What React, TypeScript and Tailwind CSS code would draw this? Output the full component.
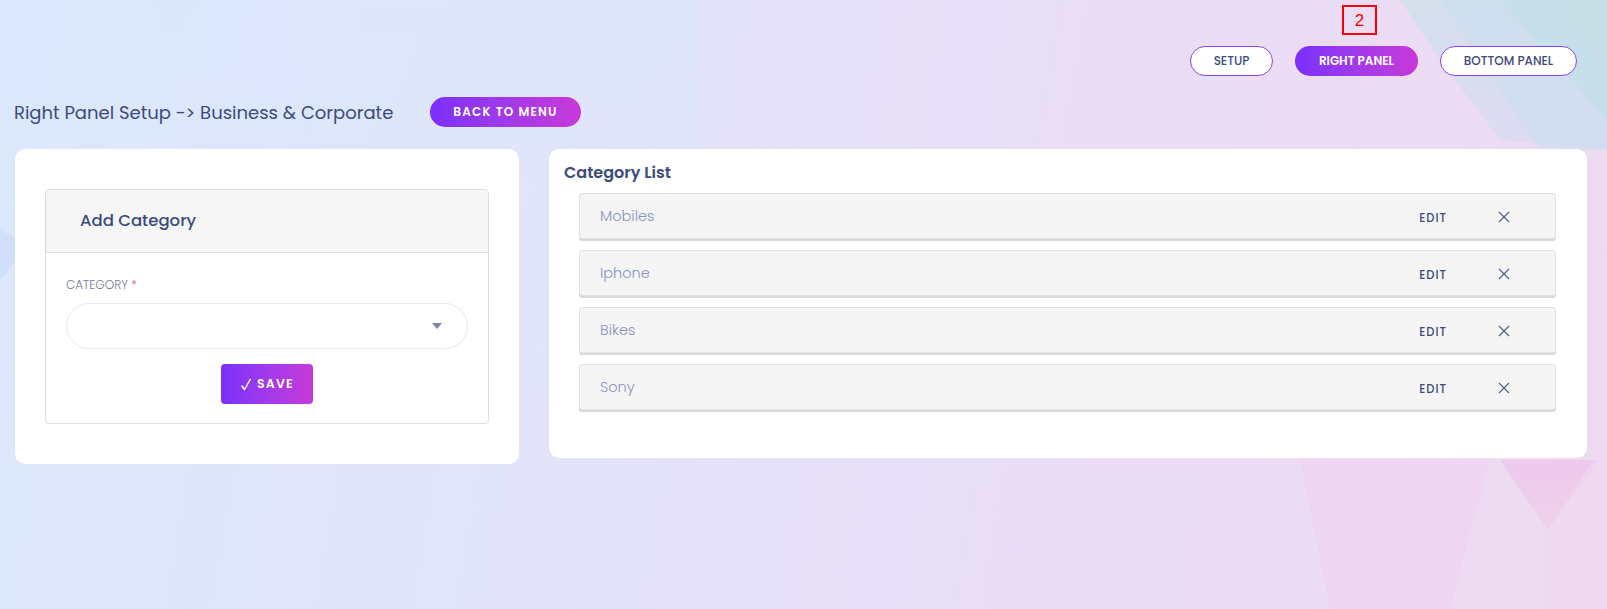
import React from "react";

const font = { fontFamily: "Poppins, 'Open Sans', 'Noto Sans', sans-serif" };

function XIcon() {
  return (
    <svg width="12" height="12" viewBox="0 0 12 12" fill="none" stroke="#4c5b8f" strokeWidth="1.1">
      <path d="M1 1L11 11M11 1L1 11" />
    </svg>
  );
}

const items = ["Mobiles", "Iphone", "Bikes", "Sony"];

export default function App() {
  return (
    <div
      className="relative w-full h-[609px] overflow-hidden bg-[linear-gradient(100deg,#dce8fd_0%,#e2e4fa_35%,#e9def7_65%,#eedaf1_100%)]"
      style={font}
    >
      {/* decorative background */}
      <svg className="absolute inset-0 pointer-events-none" width="1607" height="609" viewBox="0 0 1607 609">
        <defs>
          <linearGradient id="tr" x1="0" y1="0" x2="1" y2="1">
            <stop offset="0" stopColor="#bfe3e6" stopOpacity="0.9" />
            <stop offset="1" stopColor="#c9d8f5" stopOpacity="0.6" />
          </linearGradient>
          <linearGradient id="pk" x1="0" y1="0" x2="0" y2="1">
            <stop offset="0" stopColor="#eec3ec" stopOpacity="0.8" />
            <stop offset="1" stopColor="#f0c7e6" stopOpacity="0.5" />
          </linearGradient>
          <linearGradient id="bl" x1="0" y1="0" x2="0" y2="1">
            <stop offset="0" stopColor="#dbe7fd" stopOpacity="1" />
            <stop offset="1" stopColor="#dbe7fd" stopOpacity="0" />
          </linearGradient>
        </defs>
        <rect x="0" y="0" width="700" height="420" fill="url(#bl)" opacity="0.6" />
        <polygon points="1400,0 1607,0 1607,150 1500,140 1440,60" fill="url(#tr)" opacity="0.6" />
        <polygon points="1500,0 1607,0 1607,120" fill="#b7e2e0" opacity="0.6" />
        <polygon points="1440,0 1560,0 1607,60 1607,150 1540,150" fill="#c6dff0" opacity="0.5" />
        <polygon points="1300,460 1490,460 1450,609 1330,609" fill="#efd3f1" opacity="0.7" />
        <polygon points="1500,460 1600,460 1548,530" fill="url(#pk)" />
        <polygon points="1548,530 1607,440 1607,609 1548,609" fill="#f0d9f0" opacity="0.7" />
        <polygon points="0,230 30,245 0,280" fill="#cfdcfb" opacity="0.8" />
      </svg>

      {/* annotation marker */}
      <div
        className="absolute left-[1342px] top-[5px] w-[35px] h-[30px] border-2 border-[#ff0000] flex items-center justify-center text-[#ff0000] text-[17px] leading-none"
        style={{ fontFamily: "'Liberation Sans', Arial, sans-serif" }}
      >
        2
      </div>

      <div className="relative flex flex-col">
        {/* top buttons */}
        <div className="flex justify-end gap-[22px] pt-[46px] pr-[30px]">
          <button className="h-[30px] w-[83px] rounded-full border border-[#8b45f5] bg-white text-[12px] font-medium text-[#3d4a7c]">
            SETUP
          </button>
          <button className="h-[30px] w-[123px] rounded-full bg-gradient-to-r from-[#7b2ffa] to-[#c838d8] text-[12px] font-semibold text-white">
            RIGHT PANEL
          </button>
          <button className="h-[30px] w-[137px] rounded-full border border-[#8b45f5] bg-white text-[12px] font-medium text-[#3d4a7c]">
            BOTTOM PANEL
          </button>
        </div>

        {/* title row */}
        <div className="flex items-center pl-[14px] mt-[21px] h-[30px]">
          <div className="w-[385px] text-[18px] text-[#3b4a7c] whitespace-nowrap">Right Panel Setup -&gt; Business &amp; Corporate</div>
          <button className="ml-[31px] h-[30px] w-[151px] rounded-full bg-gradient-to-r from-[#7b2ffa] to-[#c838d8] text-[12px] font-semibold tracking-[1.2px] text-white">
            BACK TO MENU
          </button>
        </div>

        {/* cards */}
        <div className="flex items-start gap-[30px] pl-[15px] mt-[22px]">
          {/* left card */}
          <div className="w-[504px] shrink-0 rounded-[10px] bg-white px-[30px] pt-[40px] pb-[40px]">
            <div className="rounded-[4px] border border-[#dedede]">
              <div className="h-[63px] bg-[#f6f6f6] border-b border-[#dedede] flex items-center pl-[34px] rounded-t-[4px]">
                <span className="text-[16.5px] font-medium text-[#3b4a7c]">Add Category</span>
              </div>
              <div className="px-[20px] pt-[25px] pb-[19px] flex flex-col">
                <div className="text-[12px] font-light text-[#6e7b9c] leading-[14px]">
                  CATEGORY <span className="text-[#e8455e]">*</span>
                </div>
                <div className="mt-[11px] h-[46px] w-[402px] rounded-full border border-[#e8e8ee] bg-white flex items-center justify-end pr-[25px]">
                  <svg width="10" height="6" viewBox="0 0 10 6">
                    <path d="M0 0H10L5 6Z" fill="#7a87a6" />
                  </svg>
                </div>
                <div className="flex justify-center mt-[15px]">
                  <button className="h-[40px] w-[92px] rounded-[4px] bg-gradient-to-r from-[#7b2ffa] to-[#c838d8] text-white text-[12.5px] font-semibold tracking-[1.2px] flex items-center justify-center gap-[5px]">
                    <svg width="12" height="13" viewBox="0 0 12 13" fill="none" stroke="white" strokeWidth="1.5">
                      <path d="M1.5 7.5L4.5 11.5L10.5 1" />
                    </svg>
                    SAVE
                  </button>
                </div>
              </div>
            </div>
          </div>

          {/* right card */}
          <div className="w-[1038px] shrink-0 rounded-[10px] bg-white pl-[15px] pr-[31px] pt-[12px] pb-[48px]">
            <div className="text-[16px] font-semibold text-[#3b4a7c] leading-[24px]">Category List</div>
            <div className="flex flex-col gap-[11px] pl-[15px] mt-[8px]">
              {items.map((it) => (
                <div
                  key={it}
                  className="h-[46px] rounded-[3px] border border-[#e2e2e2] bg-[#f5f5f5] shadow-[0_2px_0_#d9d9d9] flex items-center pl-[20px] pt-[2px]"
                >
                  <span className="flex-1 text-[14.5px] font-light text-[#8593c2]">{it}</span>
                  <span className="text-[11.5px] font-medium tracking-[1px] text-[#3b4a7c] translate-y-[2px]">EDIT</span>
                  <span className="ml-[51px] mr-[45px] flex items-center">
                    <XIcon />
                  </span>
                </div>
              ))}
            </div>
          </div>
        </div>
      </div>
    </div>
  );
}
